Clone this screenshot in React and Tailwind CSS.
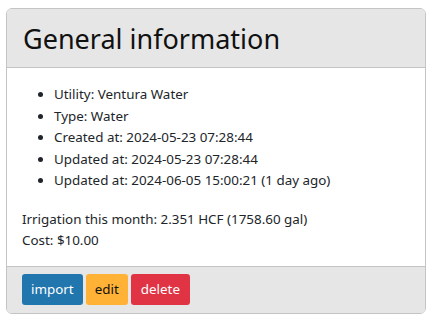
import React from "react";

const items = [
  "Utility: Ventura Water",
  "Type: Water",
  "Created at: 2024-05-23 07:28:44",
  "Updated at: 2024-05-23 07:28:44",
  "Updated at: 2024-06-05 15:00:21 (1 day ago)",
];

export default function App() {
  return (
    <div className="bg-white w-[432px] h-[321px] pt-2 px-[6px] font-['Noto_Sans',sans-serif] text-[#212529]">
      <div className="border border-[#c4c4c4] rounded-[6px] overflow-hidden">
        <div className="bg-[#e6e6e6] border-b border-[#c4c4c4] h-[59px] px-4 flex items-center">
          <h1 className="text-[27px] leading-none text-[#111]">General information</h1>
        </div>
        <div className="px-[15px] pt-[16px] pb-[14px] text-[13.4px] leading-[21.5px]">
          <ul className="list-disc pl-8 mb-[17px]">
            {items.map((t, i) => (
              <li key={i}>{t}</li>
            ))}
          </ul>
          <p>Irrigation this month: 2.351 HCF (1758.60 gal)</p>
          <p>Cost: $10.00</p>
        </div>
        <div className="bg-[#e6e6e6] border-t border-[#c4c4c4] h-[47px] px-[15px] flex items-center gap-[3px] text-[13.4px]">
          <button className="h-[31px] px-[9px] rounded-[3px] bg-[#2176ae] text-white">import</button>
          <button className="h-[31px] px-[9px] rounded-[3px] bg-[#ffb236] text-[#111]">edit</button>
          <button className="h-[31px] px-[10px] rounded-[3px] bg-[#e03444] text-white">delete</button>
        </div>
      </div>
    </div>
  );
}
